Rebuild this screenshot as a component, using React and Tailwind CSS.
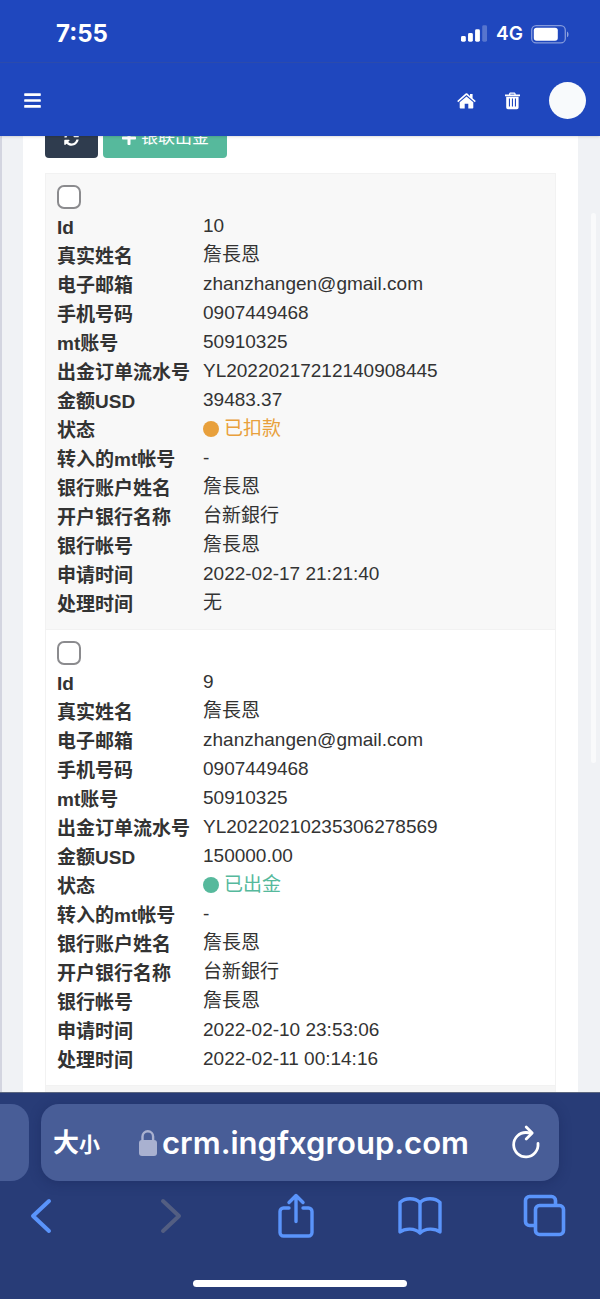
import React, { useState } from 'react';
import { FaBars, FaPlus, FaSyncAlt } from 'react-icons/fa';

const statusColors = {
  已扣款: { dot: 'bg-[#e8a03c]', text: 'text-[#e8a03c]' },
  已出金: { dot: 'bg-[#56b99c]', text: 'text-[#56b99c]' },
};

const records = [
  {
    id: '10',
    fields: [
      ['Id', '10'],
      ['真实姓名', '詹長恩'],
      ['电子邮箱', 'zhanzhangen@gmail.com'],
      ['手机号码', '0907449468'],
      ['mt账号', '50910325'],
      ['出金订单流水号', 'YL20220217212140908445'],
      ['金额USD', '39483.37'],
      ['状态', '已扣款'],
      ['转入的mt帐号', '-'],
      ['银行账户姓名', '詹長恩'],
      ['开户银行名称', '台新銀行'],
      ['银行帐号', '詹長恩'],
      ['申请时间', '2022-02-17 21:21:40'],
      ['处理时间', '无'],
    ],
  },
  {
    id: '9',
    fields: [
      ['Id', '9'],
      ['真实姓名', '詹長恩'],
      ['电子邮箱', 'zhanzhangen@gmail.com'],
      ['手机号码', '0907449468'],
      ['mt账号', '50910325'],
      ['出金订单流水号', 'YL20220210235306278569'],
      ['金额USD', '150000.00'],
      ['状态', '已出金'],
      ['转入的mt帐号', '-'],
      ['银行账户姓名', '詹長恩'],
      ['开户银行名称', '台新銀行'],
      ['银行帐号', '詹長恩'],
      ['申请时间', '2022-02-10 23:53:06'],
      ['处理时间', '2022-02-11 00:14:16'],
    ],
  },
];

const StatusBar = () => (
  <div className="flex h-[63px] items-center justify-between border-b border-[#2b4bad] pt-1.5 pr-[31px] pl-14 font-['Inter',sans-serif]">
    <span className="text-2xl font-bold">7:55</span>
    <div className="flex items-center gap-2">
      <svg width="27" height="18" viewBox="0 0 28 18" fill="currentColor">
        <rect x="0" y="11" width="5" height="6" rx="1.5" />
        <rect x="7.3" y="8" width="5" height="9" rx="1.5" />
        <rect x="14.6" y="4" width="5" height="13" rx="1.5" />
        <rect x="22" y="0" width="5" height="17" rx="1.5" opacity="0.25" />
      </svg>
      <span className="text-[19px] leading-6 font-semibold">4G</span>
      <svg width="38" height="19" viewBox="0 0 38 19" fill="none">
        <rect x="0.7" y="0.7" width="33.6" height="17.2" rx="4.5" stroke="white" strokeOpacity="0.45" strokeWidth="1.3" />
        <rect x="2.8" y="2.8" width="24" height="13" rx="2.8" fill="white" />
        <path d="M36 6.5c2 .8 2 5 0 5.8z" fill="white" fillOpacity="0.5" />
      </svg>
    </div>
  </div>
);

const NavBar = () => (
  <nav className="flex h-[73px] items-center justify-between pt-0.5 pr-[14px] pl-[23px]">
    <button type="button" aria-label="Menu">
      <FaBars size={19} />
    </button>
    <div className="flex items-center">
      <a href="#home" aria-label="Home" className="mr-7">
        <svg width="19" height="16" viewBox="0 0 19 16" fill="currentColor">
          <path d="M9.5 0.3a1.3 1.3 0 0 1 .9.3L13 2.9V1h2.6v4.2l3.2 2.9-1 1.2L9.5 2 1.2 9.3.2 8.1 8.6.6a1.3 1.3 0 0 1 .9-.3z" />
          <path d="M9.5 3.4 16.3 9.3V14.8a.8.8 0 0 1-.8.8H11.3V10.7H7.7V15.6H3.5a.8.8 0 0 1-.8-.8V9.3z" />
        </svg>
      </a>
      <button type="button" aria-label="Delete" className="mr-7">
        <svg width="17" height="18" viewBox="0 0 17 18" fill="currentColor" fillRule="evenodd">
          <path d="M1 2.6H5V2C5 1 5.7.4 6.6.4H10C11 .4 11.7 1 11.7 2V2.6H16V4.2H1zM6.3 2.6H10.4V1.7H6.3z" />
          <path d="M2.2 4.8H14.6V15.5A1.7 1.7 0 0 1 12.9 17.2H3.9A1.7 1.7 0 0 1 2.2 15.5zM4.9 6.5V14.5H6V6.5zM7.9 6.5V14.5H9V6.5zM10.9 6.5V14.5H12V6.5z" />
        </svg>
      </button>
      <button type="button" aria-label="Account" className="size-[37px] rounded-full bg-[#f8fafc]" />
    </div>
  </nav>
);

const FieldValue = ({ value }) => {
  const color = statusColors[value];
  if (!color) return value;
  return (
    <span className={`flex items-center gap-[5px] ${color.text}`}>
      <span className={`size-4 rounded-full ${color.dot}`} />
      {value}
    </span>
  );
};

const RecordCard = ({ record, striped, checked, onToggle }) => (
  <section className={`border-b border-[#f2f2f2] px-[11px] pt-[11px] pb-[11px] ${striped ? 'bg-[#f8f8f8]' : 'bg-white'}`}>
    <input
      type="checkbox"
      aria-label={`选择 ${record.id}`}
      checked={checked}
      onChange={onToggle}
      className="block size-6 appearance-none rounded-[7px] border-2 border-[#8b8b8e] bg-white checked:bg-[#1f47be]"
    />
    <table className="mt-[3px] w-full">
      <tbody>
        {record.fields.map(([label, value]) => (
          <tr key={label}>
            <th scope="row" className="w-[146px] pt-0.5 text-left leading-[27px] font-bold whitespace-nowrap">
              {label}
            </th>
            <td className="pb-0.5 leading-[27px]">
              <FieldValue value={value} />
            </td>
          </tr>
        ))}
      </tbody>
    </table>
  </section>
);

const BrowserBar = () => (
  <footer className="border-t border-[#5c6780] bg-[#283c77] font-['Inter','Noto_Sans_CJK_SC',sans-serif]">
    <div className="flex gap-3 pt-[11px] pr-[41px]">
      <div className="h-[77px] w-[29px] rounded-r-[18px] bg-[#485d97]" />
      <div className="flex h-[77px] flex-1 items-center justify-between rounded-[18px] bg-[#485d97] pr-[18px] pl-3 text-white shadow-[0_2px_12px_rgba(20,32,80,0.35)]">
        <button type="button" className="flex items-baseline font-bold">
          <span className="text-[26px]">大</span>
          <span className="text-[21px]">小</span>
        </button>
        <div className="mr-1 flex items-center gap-1">
          <svg width="20" height="28" viewBox="0 0 20 28" fill="none">
            <path d="M4.5 12V7.5a5.3 5.3 0 0 1 10.6 0V12" stroke="#a9b1d0" strokeWidth="2.4" />
            <rect x="1" y="11" width="18" height="16" rx="3" fill="#a9b1d0" />
          </svg>
          <span className="pt-0.5 text-[31px] font-semibold">crm.ingfxgroup.com</span>
        </div>
        <button type="button" aria-label="Reload">
          <svg width="30" height="36" viewBox="0 0 30 36" fill="none" stroke="currentColor" strokeWidth="2.8" strokeLinecap="round" strokeLinejoin="round">
            <path d="M27 18.5A12.2 12.2 0 1 1 15 7.5L20 8" />
            <path d="M15.2 2 21.2 8 15.2 14" />
          </svg>
        </button>
      </div>
    </div>
    <div className="flex h-[70px] items-center justify-between pr-[31px] pl-[30px] text-[#5a94fb]">
      <button type="button" aria-label="Back" className="w-10">
        <svg width="22" height="36" viewBox="0 0 22 36" fill="none" stroke="currentColor" strokeWidth="4" strokeLinecap="round" strokeLinejoin="round">
          <path d="M19 3 3 18 19 33" />
        </svg>
      </button>
      <button type="button" aria-label="Forward" className="flex w-12 justify-center text-[#535e82]">
        <svg width="22" height="36" viewBox="0 0 22 36" fill="none" stroke="currentColor" strokeWidth="4" strokeLinecap="round" strokeLinejoin="round">
          <path d="M3 3 19 18 3 33" />
        </svg>
      </button>
      <button type="button" aria-label="Share" className="flex w-12 justify-center">
        <svg width="38" height="46" viewBox="0 0 38 46" fill="none" stroke="currentColor" strokeWidth="3.4" strokeLinecap="round" strokeLinejoin="round">
          <path d="M12 15H6.5a3.500 3.500 0 0 0-3.500 3.500V39.500a3.500 3.500 0 0 0 3.500 3.500H31.500a3.500 3.500 0 0 0 3.500-3.500V18.500a3.500 3.500 0 0 0-3.500-3.500H26" />
          <path d="M19 28.500V3M12 9.500 19 2.500 26 9.500" />
        </svg>
      </button>
      <button type="button" aria-label="Bookmarks" className="flex w-12 justify-center">
        <svg width="46" height="40" viewBox="0 0 46 40" fill="none" stroke="currentColor" strokeWidth="3.4" strokeLinecap="round" strokeLinejoin="round">
          <path d="M23 37C18 32 8 32 3 36V6.500C8 1.500 18 1.500 23 6.500 28 1.500 38 1.500 43 6.500V36C38 32 28 32 23 37z" />
          <path d="M23 6.500V36" />
        </svg>
      </button>
      <button type="button" aria-label="Tabs" className="flex w-12 justify-center">
        <svg width="44" height="44" viewBox="0 0 44 44" fill="none" stroke="currentColor" strokeWidth="3.6" strokeLinejoin="round">
          <path d="M12 31.5H6.5a4 4 0 0 1-4-4V6.5a4 4 0 0 1 4-4H28.5a4 4 0 0 1 4 4V11" />
          <rect x="12.5" y="11.5" width="28" height="29" rx="4" />
        </svg>
      </button>
    </div>
    <div className="flex justify-center pt-[29px] pb-3">
      <div className="h-[7px] w-[214px] rounded-full bg-white" />
    </div>
  </footer>
);

const App = () => {
  const [selected, setSelected] = useState([]);

  const toggleRecord = (id) => {
    setSelected(selected.includes(id) ? selected.filter(item => item !== id) : [...selected, id]);
  };

  return (
    <div className="flex min-h-screen flex-col bg-[#f0f2f5] font-['Liberation_Sans','Noto_Sans_CJK_SC',sans-serif] text-[19px] text-[#333]">
      <header className="relative z-10 bg-[#1f47be] text-white shadow-sm">
        <StatusBar />
        <NavBar />
      </header>

      <main className="relative flex-1 overflow-hidden border-l-2 border-[#d3d5e0] pr-[22px] pl-[21px]">
        <div className="h-full bg-white px-[22px]">
          {/* Toolbar, scrolled partly under the header */}
          <div className="-mt-[18px] flex gap-[5px] pb-[15px] text-white">
            <button type="button" aria-label="刷新" className="flex h-10 w-[53px] items-center justify-center rounded-[4px] bg-[#2f3c4e]">
              <FaSyncAlt size={15} />
            </button>
            <button type="button" className="flex h-10 items-center gap-1 rounded-[4px] bg-[#56b99c] px-[18px] text-[17px]">
              <FaPlus size={16} />
              银联出金
            </button>
          </div>

          <div className="border-x border-t border-[#f2f2f2]">
            {records.map((record, index) => (
              <RecordCard
                key={record.id}
                record={record}
                striped={index % 2 === 0}
                checked={selected.includes(record.id)}
                onToggle={() => toggleRecord(record.id)}
              />
            ))}
            <div className="h-[6px] bg-[#f5f5f5]" />
          </div>
        </div>
        <div className="absolute top-[77px] right-1 h-[550px] w-[5px] rounded-full bg-[#f9fafb]" />
      </main>

      <BrowserBar />
    </div>
  );
};

export default App;
